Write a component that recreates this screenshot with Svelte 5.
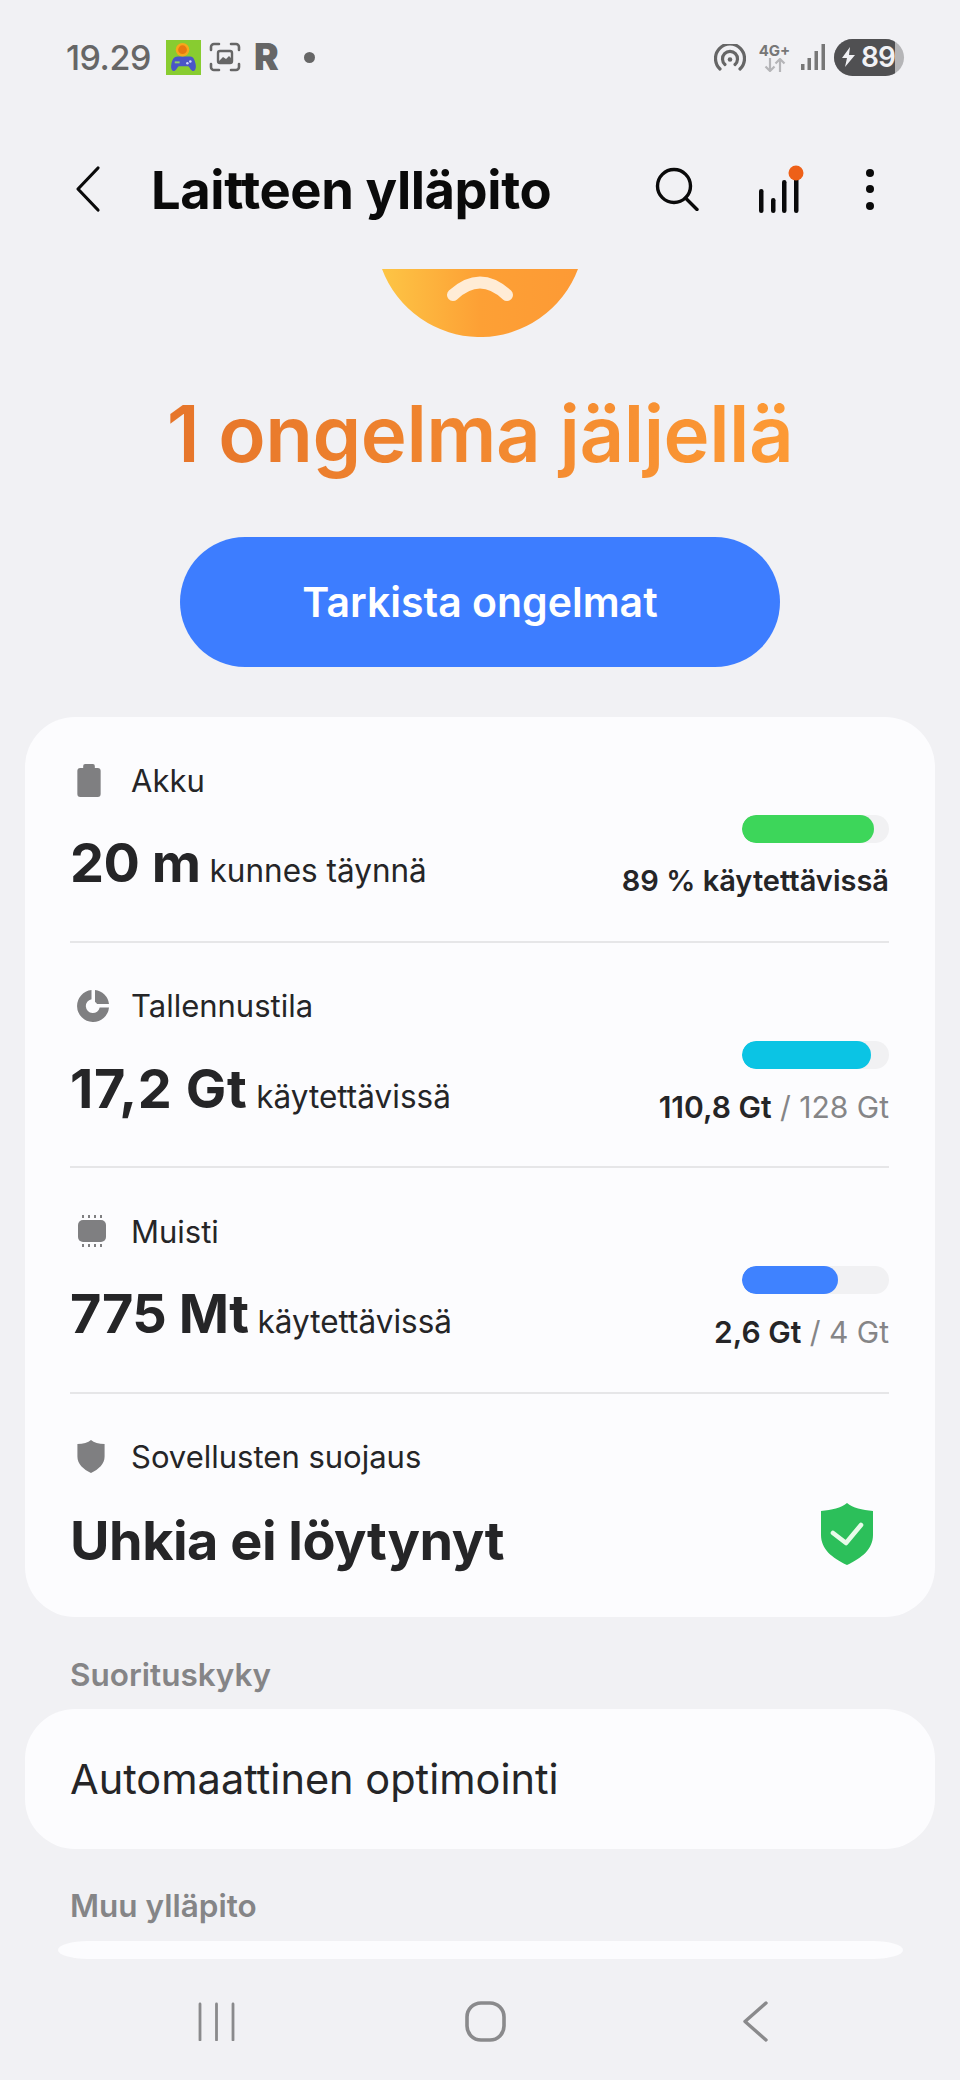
<script>
  const items = [
    { icon: 'battery', label: 'Akku', big: '20 m', small: 'kunnes täynnä', pct: 89.5, color: '#3dd65a', strong: '89 % käytettävissä', rest: '' },
    { icon: 'pie', label: 'Tallennustila', big: '17,2 Gt', small: 'käytettävissä', pct: 87.5, color: '#0bc4e4', strong: '110,8 Gt', rest: ' / 128 Gt', spacing: 0.6 },
    { icon: 'chip', label: 'Muisti', big: '775 Mt', small: 'käytettävissä', pct: 65.5, color: '#3f82ff', strong: '2,6 Gt', rest: ' / 4 Gt' }
  ];
</script>

<div class="screen">
  <div class="status">
    <span class="time">19.29</span>
    <svg class="game" width="35" height="35" viewBox="0 0 36 36">
      <rect width="36" height="36" fill="#88cc30" />
      <path d="M12 17h13c3 0 4.500 3 5.500 8 .8 4-.5 7-2.500 7-2 0-3-3-5-5H13c-2 2-3 5-5 5s-3.300-3-2.500-7c1-5 2.500-8 6.500-8z" fill="#4a55c8" />
      <circle cx="17" cy="10" r="7" fill="#f7a81b" />
      <circle cx="17" cy="10" r="4.500" fill="#e8790f" />
      <circle cx="25" cy="22" r="1.300" fill="#cfd6ff" />
      <circle cx="22" cy="24" r="1.300" fill="#cfd6ff" />
      <rect x="9" y="22" width="5" height="2" fill="#8fd06a" />
    </svg>
    <svg class="shot" width="32" height="30" viewBox="0 0 32 30" fill="none" stroke="#666" stroke-width="2.600" stroke-linecap="round">
      <path d="M2 8V5a3 3 0 0 1 3-3h5M22 2h5a3 3 0 0 1 3 3v3M30 22v3a3 3 0 0 1-3 3h-5M10 28H5a3 3 0 0 1-3-3v-3" />
      <rect x="9" y="9" width="14" height="12" rx="2" stroke-width="2.400" />
      <path d="M9 20l5-5 3 2 3-3 3 3v4H9z" fill="#666" stroke="none" />
    </svg>
    <span class="r">R</span>
    <span class="dot"></span>
    <span class="spacer"></span>
    <svg width="32" height="27" viewBox="0 0 32 27" fill="none" stroke="#666" stroke-width="3.200" stroke-linecap="round">
      <path d="M6 25A14.500 14.500 0 1 1 26 25" />
      <path d="M11 20.500a7.500 7.500 0 1 1 10 0" />
      <circle cx="16" cy="15.500" r="2.300" fill="#666" stroke="none" />
    </svg>
    <div class="net">
      <span>4G+</span>
      <svg width="24" height="14" viewBox="0 0 24 14" fill="none" stroke="#b5b5b8" stroke-width="2.200">
        <path d="M7 0v13M2.500 8.500L7 13l4.500-4.500M17 14V1M12.500 5.500L17 1l4.500 4.500" />
      </svg>
    </div>
    <svg class="signal" width="24" height="26" viewBox="0 0 24 26" fill="#777">
      <rect x="0" y="20" width="3.500" height="6" />
      <rect x="6.500" y="14" width="3.500" height="12" />
      <rect x="13.500" y="7" width="3.500" height="19" />
      <rect x="20.500" y="0" width="3.500" height="26" />
    </svg>
    <div class="batt">
      <div class="batt-fill">
        <svg width="13" height="20" viewBox="0 0 13 20"><path d="M8 0L0 11h5l-2 9 10-12H7z" fill="#f1f1f4" /></svg>
        <span>89</span>
      </div>
    </div>
  </div>

  <div class="toolbar">
    <svg class="back" width="28" height="48" viewBox="0 0 28 48" fill="none" stroke="#0a0a0a" stroke-width="3.200" stroke-linecap="round" stroke-linejoin="round">
      <path d="M24 3L4 24l20 21" />
    </svg>
    <h1>Laitteen ylläpito</h1>
    <svg class="search" width="44" height="44" viewBox="0 0 44 44" fill="none" stroke="#0a0a0a" stroke-width="3.400" stroke-linecap="round">
      <circle cx="19" cy="19" r="16.500" />
      <path d="M30.500 31l11.500 11.500" />
    </svg>
    <svg class="bars" width="46" height="48" viewBox="0 0 46 48" fill="#0a0a0a">
      <rect x="0" y="24" width="4.500" height="24" rx="2.200" />
      <rect x="12" y="33" width="4.500" height="15" rx="2.200" />
      <rect x="23" y="15" width="4.500" height="33" rx="2.200" />
      <rect x="35" y="8" width="4.500" height="40" rx="2.200" />
      <circle cx="37" cy="8" r="7.500" fill="#ee6018" />
    </svg>
    <div class="more"><i></i><i></i><i></i></div>
  </div>

  <div class="hero">
    <svg class="face" width="196" height="68" viewBox="0 0 196 68">
      <defs>
        <linearGradient id="faceFill" x1="0" y1="0" x2="1" y2="0">
          <stop offset="0" stop-color="#fdc545" />
          <stop offset="0.5" stop-color="#fda035" />
          <stop offset="1" stop-color="#fd9a35" />
        </linearGradient>
      </defs>
      <path d="M0 0H196A104.600 104.600 0 0 1 0 0z" fill="url(#faceFill)" />
      <path d="M71 26Q98 1 125 26" fill="none" stroke="#ffecd6" stroke-width="12" stroke-linecap="round" />
    </svg>
    <h2>1 ongelma jäljellä</h2>
    <div class="check">Tarkista ongelmat</div>
  </div>

  <section class="card main">
    {#each items as it}
      <div class="row">
        <div class="label">
          <span class="ico">
            {#if it.icon === 'battery'}
              <svg width="24" height="33" viewBox="0 0 24 34" fill="#7f7f81">
                <path d="M8 0h8a2 2 0 0 1 2 2v2h3a3 3 0 0 1 3 3v24a3 3 0 0 1-3 3H3a3 3 0 0 1-3-3V7a3 3 0 0 1 3-3h3V2a2 2 0 0 1 2-2z" />
              </svg>
            {:else if it.icon === 'pie'}
              <svg width="32" height="32" viewBox="0 0 32 32" fill="#7f7f81">
                <path d="M14.500 0v9.200a7 7 0 1 0 8.200 8.300H32A16 16 0 1 1 14.500 0z" />
                <path d="M18 0a16 16 0 0 1 14 14H20a5 5 0 0 0-2-2z" />
              </svg>
            {:else}
              <svg width="30" height="32" viewBox="0 0 30 32" fill="#7f7f81">
                <rect x="1" y="5" width="28" height="22" rx="5" />
                <path d="M5 0h2v3H5zM11 0h2v3h-2zM17 0h2v3h-2zM23 0h2v3h-2zM5 29h2v3H5zM11 29h2v3h-2zM17 29h2v3h-2zM23 29h2v3h-2z" />
              </svg>
            {/if}
          </span>
          <span>{it.label}</span>
        </div>
        <div class="value">
          <div class="left">
            <b style:letter-spacing={it.spacing ? it.spacing + 'px' : null}>{it.big}</b>
            <span>{it.small}</span>
          </div>
          <div class="right">
            <div class="track"><div class="fill" style="width:{it.pct}%;background:{it.color}"></div></div>
            <div class="usage" class:solo={!it.rest}><b>{it.strong}</b><span>{it.rest}</span></div>
          </div>
        </div>
      </div>
    {/each}
    <div class="row last">
      <div class="label">
        <span class="ico">
          <svg width="28" height="33" viewBox="0 0 28 34" fill="#7f7f81">
            <path d="M14 0c3 3 8 4 14 4v13c0 8-6 13-14 17C6 30 0 25 0 17V4c6 0 11-1 14-4z" />
          </svg>
        </span>
        <span>Sovellusten suojaus</span>
      </div>
      <div class="value">
        <b class="threat">Uhkia ei löytynyt</b>
        <svg class="shield" width="52" height="62" viewBox="0 0 52 62">
          <path d="M26 0c6 5 15 7 26 8v24c0 14-11 23-26 30C11 55 0 46 0 32V8c11-1 20-3 26-8z" fill="#2cbf5a" />
          <path d="M12 30l13 10 15-18" fill="none" stroke="#e8fbe9" stroke-width="4.600" stroke-linecap="round" stroke-linejoin="round" />
        </svg>
      </div>
    </div>
  </section>

  <h3>Suorituskyky</h3>
  <div class="card opt">Automaattinen optimointi</div>

  <h3 class="other">Muu ylläpito</h3>
  <div class="peek"></div>

  <div class="nav">
    <svg width="37" height="40" viewBox="0 0 37 40" fill="none" stroke="#8a8a8c" stroke-width="2.800" stroke-linecap="round">
      <path d="M2 3v36M18.500 3v36M35 3v36" />
    </svg>
    <svg class="home" width="41" height="41" viewBox="0 0 41 41" fill="none" stroke="#8a8a8c" stroke-width="3.600">
      <rect x="2" y="2" width="37" height="37" rx="14" />
    </svg>
    <svg class="prev" width="26" height="41" viewBox="0 0 26 41" fill="none" stroke="#8a8a8c" stroke-width="3.400" stroke-linecap="round" stroke-linejoin="round">
      <path d="M24 2L3 20.500 24 39" />
    </svg>
  </div>
</div>

<style>
  :global(body) {
    margin: 0;
    background: #f1f1f4;
  }

  .screen {
    width: 960px;
    height: 2080px;
    overflow: hidden;
    display: flex;
    flex-direction: column;
    background: #f1f1f4;
    font-family: Inter, "Liberation Sans", sans-serif;
    color: #252527;
  }

  /* Status bar */
  .status {
    height: 36px;
    padding: 39px 56px 0 66px;
    display: flex;
    align-items: center;
    flex-shrink: 0;
  }
  .time { width: 100px; font-size: 34px; font-weight: 500; color: #666; letter-spacing: -0.5px; }
  .shot { margin-left: 8px; }
  .r { margin-left: 13px; font-size: 37px; font-weight: 900; color: #666; line-height: 36px; }
  .dot { width: 11px; height: 11px; border-radius: 50%; background: #666; margin-left: 25px; }
  .spacer { flex: 1; }
  .net { display: flex; flex-direction: column; align-items: center; width: 31px; margin-left: 13px; }
  .net span { font-size: 15px; line-height: 15px; font-weight: 700; color: #777; }
  .signal { margin-left: 11px; }
  .batt {
    width: 70px;
    height: 37px;
    margin-left: 9px;
    border-radius: 19px;
    background: #b5b5b7;
    overflow: hidden;
  }
  .batt-fill {
    width: 61px;
    height: 37px;
    background: #505052;
    display: flex;
    align-items: center;
    gap: 6px;
    padding-left: 8px;
    box-sizing: border-box;
  }
  .batt-fill span { font-size: 28px; font-weight: 600; color: #f1f1f4; letter-spacing: -1px; }

  /* Toolbar */
  .toolbar {
    height: 80px;
    margin-top: 74px;
    display: flex;
    align-items: center;
    padding: 0 86px 0 74px;
    flex-shrink: 0;
  }
  .toolbar h1 { margin: 2px 0 0 49px; font-size: 52.500px; font-weight: 700; color: #0a0a0a; letter-spacing: -0.4px; flex: 1; white-space: nowrap; }
  .search { margin-right: 60px; }
  .bars { margin-right: 61px; }
  .more { display: flex; flex-direction: column; gap: 8.500px; }
  .more i { width: 8px; height: 8px; border-radius: 50%; background: #0a0a0a; }

  /* Hero */
  .hero { display: flex; flex-direction: column; align-items: center; flex-shrink: 0; }
  .face { margin-top: 40px; }
  .hero h2 {
    margin: 49px 0 0;
    font-size: 78px;
    line-height: 96px;
    font-weight: 600;
    letter-spacing: -0.5px;
    background: linear-gradient(90deg, #e6752a, #fd9a35);
    -webkit-background-clip: text;
    background-clip: text;
    color: transparent;
  }
  .check {
    width: 600px;
    height: 130px;
    margin-top: 55px;
    border-radius: 65px;
    background: #3d7dff;
    color: #fff;
    font-size: 41px;
    font-weight: 600;
    display: flex;
    align-items: center;
    justify-content: center;
  }

  /* Cards */
  .card { background: #fcfcfe; margin: 0 25px; flex-shrink: 0; }
  .main {
    margin-top: 50px;
    height: 900px;
    border-radius: 50px;
    padding: 0 46px 0 45px;
    box-sizing: border-box;
  }
  .row { height: 225.500px; border-bottom: 2px solid #e6e6e8; box-sizing: border-box; padding-top: 43px; }
  .row.last { border-bottom: 0; height: 222px; }
  .label { display: flex; align-items: center; font-size: 31px; height: 40px; }
  .ico { width: 54px; padding-left: 7px; box-sizing: content-box; display: flex; align-items: center; }
  .value { display: flex; justify-content: space-between; align-items: flex-start; margin-top: 11px; }
  .left { display: flex; align-items: baseline; padding-top: 19px; }
  .left b { font-size: 54px; font-weight: 700; letter-spacing: -0.5px; line-height: 66px; margin-right: 9px; }
  .left span { font-size: 31.500px; }
  .right { display: flex; flex-direction: column; align-items: flex-end; }
  .track { width: 147px; height: 28px; border-radius: 14px; background: #f1f1f3; overflow: hidden; margin-top: 4px; }
  .fill { height: 100%; border-radius: 14px; }
  .usage { font-size: 30px; line-height: 36px; margin-top: 20px; white-space: pre; }
  .usage.solo { font-size: 29px; }
  .usage b { font-weight: 600; }
  .usage span { color: #858587; }
  .threat { font-size: 54px; font-weight: 700; letter-spacing: -0.5px; line-height: 66px; margin-top: 20px; }
  .shield { margin: 15px 16px 0 0; }

  h3 { margin: 0 0 0 70px; font-size: 31.500px; font-weight: 600; color: #858587; line-height: 40px; padding-top: 38px; flex-shrink: 0; }
  .opt {
    margin-top: 14px;
    height: 140px;
    border-radius: 50px;
    padding-left: 45px;
    display: flex;
    align-items: center;
    font-size: 41.500px;
  }
  h3.other { padding-top: 37px; }
  .peek {
    width: 845px;
    height: 18px;
    margin: 15px 0 0 58px;
    border-radius: 30px / 9px;
    background: #fcfcfe;
    flex-shrink: 0;
  }

  /* Nav bar */
  .nav {
    margin-top: auto;
    height: 79px;
    padding-left: 198px;
    display: flex;
    align-items: flex-start;
    flex-shrink: 0;
  }
  .home { margin-left: 230px; }
  .prev { margin-left: 236px; }
</style>
